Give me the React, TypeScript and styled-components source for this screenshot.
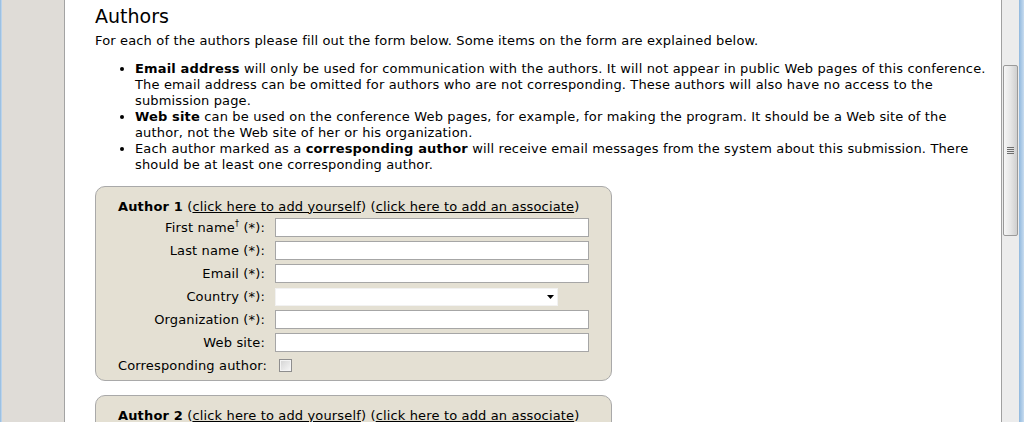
import React from "react";
import styled, { createGlobalStyle } from "styled-components";

const GlobalStyle = createGlobalStyle`
  html, body {
    margin: 0;
    padding: 0;
    background: #ffffff;
  }
  body {
    font-family: "DejaVu Sans", Verdana, sans-serif;
    font-size: 13px;
    letter-spacing: 0.15px;
    color: #000;
    overflow: hidden;
  }
`;

const Window = styled.div`
  display: flex;
  width: 1024px;
  height: 422px;
  overflow: hidden;
`;

const WindowEdge = styled.div<{ $width: number }>`
  width: ${(p) => p.$width}px;
  flex: none;
  background: linear-gradient(to right, #8fb8de, #c8dcef);
`;

const Sidebar = styled.div`
  width: 62px;
  flex: none;
  background: #dfdcd7;
  border-right: 1px solid #a3a3a3;
`;

const Main = styled.main`
  flex: 1;
  padding: 3px 10px 0 30px;
  line-height: 16px;
`;

const Title = styled.h2`
  margin: 0;
  font-size: 19px;
  font-weight: normal;
  letter-spacing: 0;
  line-height: 27px;
`;

const Intro = styled.p`
  margin: 3px 0 12px;
`;

const Notes = styled.ul`
  margin: 12px 0 13px;
  padding-left: 40px;
  li {
    margin: 0;
  }
`;

const AuthorBox = styled.section`
  width: 472px;
  margin-bottom: 14px;
  padding: 11px 21px 5px 22px;
  background: #e4e0d3;
  border: 1px solid #a9a9a9;
  border-radius: 10px;
  display: grid;
  grid-template-columns: 147px 314px;
  grid-template-rows: 16px;
  grid-auto-rows: 19px;
  column-gap: 10px;
  row-gap: 4px;
  align-items: center;
`;

const BoxHeader = styled.div`
  grid-column: 1 / span 2;
  line-height: 16px;
  padding-top: 1px;
  b {
    font-weight: bold;
  }
`;

const Link = styled.a`
  color: #000;
  text-decoration: underline;
  cursor: pointer;
`;

const Label = styled.label`
  text-align: right;
  white-space: nowrap;
  sup {
    font-size: 8px;
    line-height: 0;
    vertical-align: 6px;
  }
`;

const TextInput = styled.input`
  box-sizing: border-box;
  width: 314px;
  height: 19px;
  margin: 0;
  padding: 1px 3px;
  border: 1px solid #a6a6a6;
  background: #fff;
  font: inherit;
`;

const SelectBox = styled.div`
  box-sizing: border-box;
  width: 283px;
  height: 18px;
  background: #fff;
  border: 1px solid #f2f2f2;
  display: flex;
  align-items: center;
  justify-content: flex-end;
  padding-right: 3px;
`;

const CheckBox = styled.span`
  box-sizing: border-box;
  width: 13px;
  height: 13px;
  margin-left: 4px;
  display: block;
  border: 1px solid #8e8e8e;
  background: linear-gradient(135deg, #d3d3d3, #f8f8f8);
  box-shadow: inset 0 0 0 1px #f4f4f4;
`;

const ScrollTrack = styled.div`
  width: 17px;
  flex: none;
  background: #ececec;
  border-left: 1px solid #a0a0a0;
  display: flex;
  flex-direction: column;
  align-items: center;
`;

const ScrollThumb = styled.div`
  box-sizing: border-box;
  width: 15px;
  height: 171px;
  margin-top: 65px;
  border: 1px solid #9a9a9a;
  border-radius: 2px;
  background: linear-gradient(to right, #f6f6f6, #e6e6e6 50%, #cfcfcf);
  display: flex;
  align-items: center;
  justify-content: center;
`;

const fields = [
  { label: "Last name (*):" },
  { label: "Email (*):" },
];

function AuthorForm({ index }: { index: number }) {
  return (
    <AuthorBox>
      <BoxHeader>
        <b>Author {index}</b> (<Link>click here to add yourself</Link>) (
        <Link>click here to add an associate</Link>)
      </BoxHeader>
      <Label>
        First name<sup>†</sup> (*):
      </Label>
      <TextInput type="text" />
      {fields.map((f) => (
        <React.Fragment key={f.label}>
          <Label>{f.label}</Label>
          <TextInput type="text" />
        </React.Fragment>
      ))}
      <Label>Country (*):</Label>
      <SelectBox>
        <svg width="7" height="4" viewBox="0 0 7 4">
          <path d="M0 0h7L3.5 4z" fill="#000" />
        </svg>
      </SelectBox>
      <Label>Organization (*):</Label>
      <TextInput type="text" />
      <Label>Web site:</Label>
      <TextInput type="text" />
      <Label>Corresponding author:</Label>
      <CheckBox />
    </AuthorBox>
  );
}

export default function App() {
  return (
    <>
      <GlobalStyle />
      <Window>
        <WindowEdge $width={2} />
        <Sidebar />
        <Main>
          <Title>Authors</Title>
          <Intro>
            For each of the authors please fill out the form below. Some items on the form are explained below.
          </Intro>
          <Notes>
            <li>
              <b>Email address</b> will only be used for communication with the authors. It will not appear in
              public Web pages of this conference. The email address can be omitted for authors who are not
              corresponding. These authors will also have no access to the submission page.
            </li>
            <li>
              <b>Web site</b> can be used on the conference Web pages, for example, for making the program. It
              should be a Web site of the author, not the Web site of her or his organization.
            </li>
            <li>
              Each author marked as a <b>corresponding author</b> will receive email messages from the system
              about this submission. There should be at least one corresponding author.
            </li>
          </Notes>
          <AuthorForm index={1} />
          <AuthorForm index={2} />
        </Main>
        <ScrollTrack>
          <ScrollThumb>
            <svg width="7" height="7" viewBox="0 0 7 7">
              <path d="M0 0.5h7M0 2.5h7M0 4.5h7M0 6.5h7" stroke="#6d6d6d" strokeWidth="1" />
            </svg>
          </ScrollThumb>
        </ScrollTrack>
        <WindowEdge $width={5} />
      </Window>
    </>
  );
}
